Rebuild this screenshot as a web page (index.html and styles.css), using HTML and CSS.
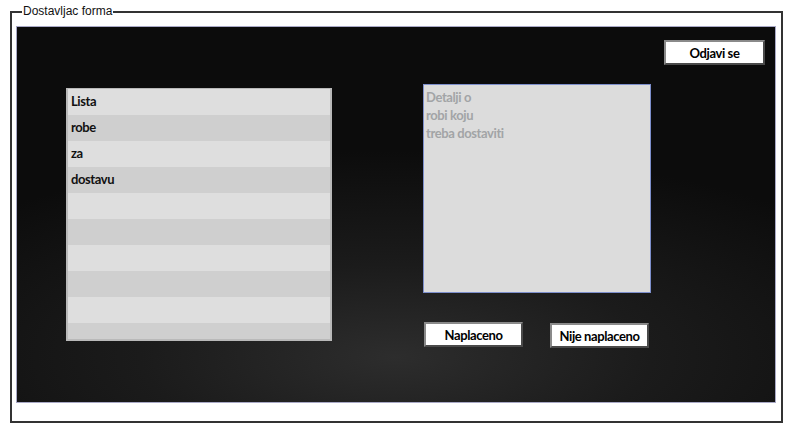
FILE: index.html
```html
<!DOCTYPE html>
<html>
<head>
<meta charset="utf-8">
<link rel="stylesheet" href="styles.css">
</head>
<body>
<div class="wrap">
  <fieldset class="frame">
    <legend class="frame-title">Dostavljac forma</legend>
    <div class="panel">
      <div class="header">
        <button class="btn btn-logout">Odjavi se</button>
      </div>
      <div class="body">
        <div class="list">
          <div class="row">Lista</div>
          <div class="row">robe</div>
          <div class="row">za</div>
          <div class="row">dostavu</div>
          <div class="row"></div>
          <div class="row"></div>
          <div class="row"></div>
          <div class="row"></div>
          <div class="row"></div>
          <div class="row"></div>
        </div>
        <div class="right">
          <div class="details">Detalji o<br>robi koju<br>treba dostaviti</div>
          <div class="actions">
            <button class="btn btn-paid">Naplaceno</button>
            <button class="btn btn-unpaid">Nije naplaceno</button>
          </div>
        </div>
      </div>
    </div>
  </fieldset>
</div>
</body>
</html>
```
FILE: styles.css
```css
html, body {
  margin: 0;
  padding: 0;
  background: #ffffff;
}
.wrap {
  padding: 5px 8px 0 10px;
}
.frame {
  margin: 0;
  width: 773px;
  box-sizing: border-box;
  border: 2px solid #333333;
  padding: 8px 5px 18px 4px;
}
.frame-title {
  font-family: "Liberation Sans", Arial, sans-serif;
  font-size: 12px;
  color: #111;
  padding: 0 1px;
  margin-left: 6px;
  line-height: 13px;
}
.panel {
  height: 377px;
  box-sizing: border-box;
  border: 1px solid #a9a9c6;
  background: radial-gradient(ellipse 75% 55% at 50% 88%, #2d2d2d 0%, #1b1b1b 45%, #0c0c0c 100%);
  padding: 13px 10px 0 49px;
  font-family: Lato, "Open Sans", sans-serif;
  font-weight: bold;
}
.header {
  display: flex;
  justify-content: flex-end;
  height: 24px;
}
.btn {
  font-family: Lato, "Open Sans", sans-serif;
  font-weight: bold;
  font-size: 13px;
  letter-spacing: -0.4px;
  white-space: nowrap;
  color: #000;
  background: #ffffff;
  border: 2px solid;
  border-color: #8a8a8a #4a4a4a #4a4a4a #8a8a8a;
  padding: 0;
  height: 25px;
  box-sizing: border-box;
}
.btn-logout {
  width: 101px;
}
.body {
  display: flex;
  align-items: flex-start;
}
.list {
  margin-top: 24px;
  width: 266px;
  height: 253px;
  box-sizing: border-box;
  border: 2px solid #b9b9b9;
  border-top-width: 1px;
  overflow: hidden;
  background: #dedede;
}
.row {
  height: 26px;
  line-height: 24px;
  padding-left: 3px;
  font-size: 13px;
  letter-spacing: -0.4px;
  color: #111;
  background: #dedede;
}
.row:nth-child(even) {
  background: #cfcfcf;
}
.right {
  margin-left: 91px;
  margin-top: 20px;
  display: flex;
  flex-direction: column;
}
.details {
  width: 228px;
  height: 209px;
  box-sizing: border-box;
  border: 1px solid #7d8fcc;
  background: #dcdcdc;
  color: #a2a4a6;
  font-size: 13px;
  letter-spacing: -0.4px;
  line-height: 18px;
  padding: 3px 2px;
}
.actions {
  display: flex;
  align-items: flex-start;
  margin-top: 29px;
  padding-left: 1px;
}
.btn-paid {
  width: 99px;
}
.btn-unpaid {
  width: 99px;
  margin-left: 27px;
  margin-top: 1px;
}
```
